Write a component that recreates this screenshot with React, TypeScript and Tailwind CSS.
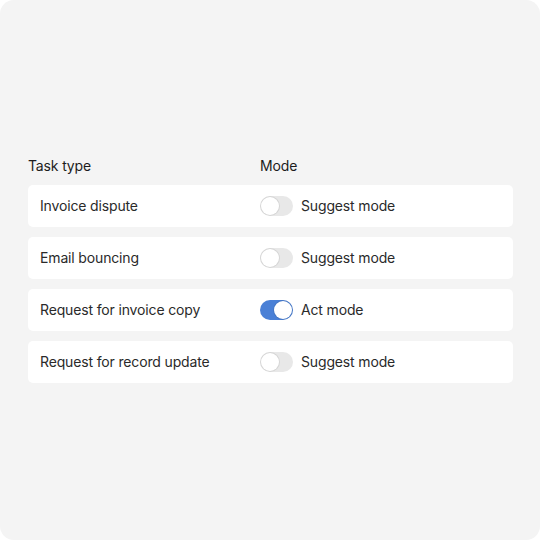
import { useState } from 'react';

interface TaskRow {
  label: string;
  act: boolean;
}

const initialRows: TaskRow[] = [
  { label: 'Invoice dispute', act: false },
  { label: 'Email bouncing', act: false },
  { label: 'Request for invoice copy', act: true },
  { label: 'Request for record update', act: false },
];

function Toggle({ on, onClick }: { on: boolean; onClick: () => void }) {
  return (
    <button
      onClick={onClick}
      className={`relative h-[20px] w-[33px] rounded-full transition-colors ${
        on ? 'bg-[#4a80d6]' : 'bg-[#e8e8e8]'
      }`}
    >
      <span
        className={`absolute top-[1px] h-[18px] w-[18px] rounded-full bg-white shadow-[0_0_0_1px_rgba(0,0,0,0.08)] transition-all ${
          on ? 'left-[14px]' : 'left-[1px]'
        }`}
      />
    </button>
  );
}

export default function App() {
  const [rows, setRows] = useState(initialRows);

  const toggle = (i: number) =>
    setRows(rows.map((r, idx) => (idx === i ? { ...r, act: !r.act } : r)));

  return (
    <div className="h-[540px] w-[540px] bg-white font-['Inter',sans-serif] tracking-[-0.15px]">
      <div className="flex h-full w-full flex-col justify-center rounded-[14px] bg-[#f4f4f4] pb-[3px] pl-7 pr-[27px]">
        <div className="grid h-5 grid-cols-[232px_1fr] items-center text-[14px] text-[#1c1c1c]">
          <span>Task type</span>
          <span>Mode</span>
        </div>
        <div className="mt-[10px] flex flex-col gap-[10px]">
          {rows.map((row, i) => (
            <div
              key={row.label}
              className="grid h-[42px] grid-cols-[220px_1fr] items-center rounded-[5px] bg-white px-3 text-[14px] text-[#2a2a2a]"
            >
              <span>{row.label}</span>
              <div className="flex items-center gap-[8px]">
                <Toggle on={row.act} onClick={() => toggle(i)} />
                <span>{row.act ? 'Act mode' : 'Suggest mode'}</span>
              </div>
            </div>
          ))}
        </div>
      </div>
    </div>
  );
}
